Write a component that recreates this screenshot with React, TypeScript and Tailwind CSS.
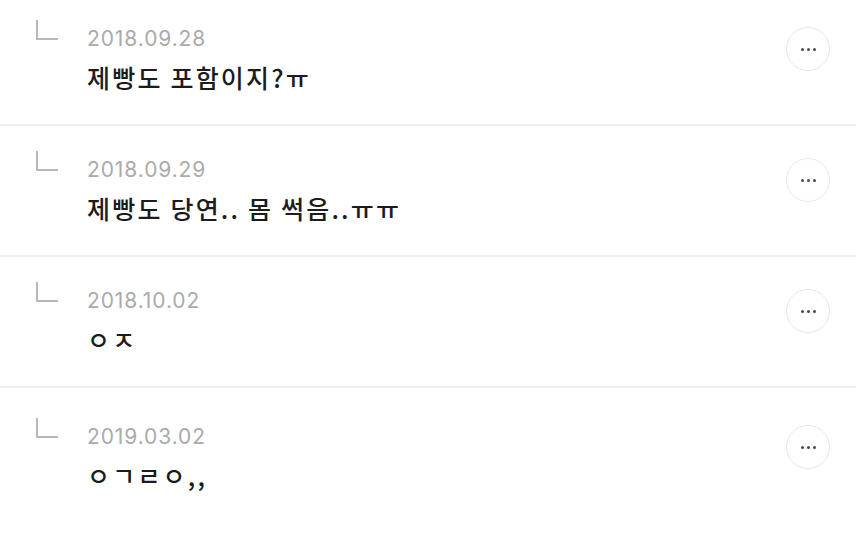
import React from "react";

interface Reply { id: number; date: string; text: string; }

const replies: Reply[] = [
  { id: 1, date: "2018.09.28", text: "제빵도 포함이지?ㅠ" },
  { id: 2, date: "2018.09.29", text: "제빵도 당연.. 몸 썩음..ㅠㅠ" },
  { id: 3, date: "2018.10.02", text: "ㅇㅈ" },
  { id: 4, date: "2019.03.02", text: "ㅇㄱㄹㅇ,," },
];

function ReplyCorner() {
  return (
    <svg width="24" height="21" viewBox="0 0 24 21" className="block">
      <path d="M2 0 V19 H23" fill="none" stroke="#b8b8b8" strokeWidth="2" />
    </svg>
  );
}

function MoreButton() {
  return (
    <button className="w-[44px] h-[44px] rounded-full border-[1.5px] border-[#e6e6e6] bg-white flex items-center justify-center gap-[3px]">
      <span className="w-[3px] h-[3px] rounded-full bg-[#4a4a4a]" />
      <span className="w-[3px] h-[3px] rounded-full bg-[#4a4a4a]" />
      <span className="w-[3px] h-[3px] rounded-full bg-[#4a4a4a]" />
    </button>
  );
}

export default function App() {
  return (
    <div className="w-[856px] h-[539px] overflow-hidden bg-white" style={{ fontFamily: '"Inter", "Noto Sans CJK KR", sans-serif' }}>
      <div className="mt-[-5px]">
        {replies.map((r, i) => {
          const last = i === replies.length - 1;
          return (
            <div key={r.id} className={last ? "flex h-[160px] pt-[5px]" : "flex h-[131px] border-b-2 border-[#ededed]"}>
              <div className="w-[87px] shrink-0 pl-[35px] pt-[25px]">
                <ReplyCorner />
              </div>
              <div className="flex-1 pt-[32px]">
                <div className="text-[21px] leading-[24px] text-[#ababab] tracking-[0.9px]">{r.date}</div>
                <div className="mt-[11px] text-[25px] leading-[30px] font-medium text-[#1c1c1c] tracking-[2.2px]" style={{ fontFamily: '"Noto Sans CJK KR", sans-serif' }}>{r.text}</div>
              </div>
              <div className="pt-[32px] pr-[26px]">
                <MoreButton />
              </div>
            </div>
          );
        })}
      </div>
    </div>
  );
}
